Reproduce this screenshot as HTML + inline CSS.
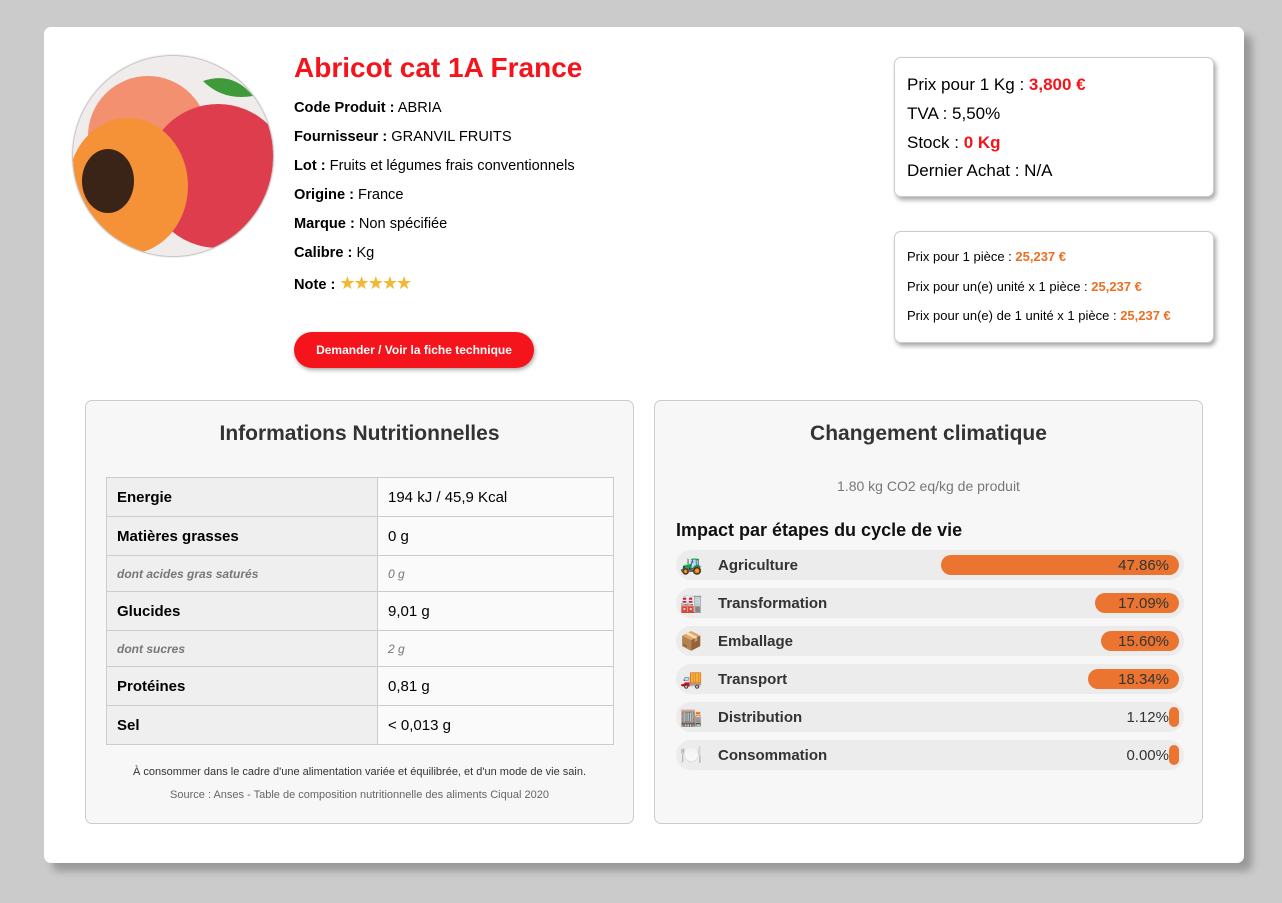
<!DOCTYPE html>
<html><head><meta charset="utf-8"><style>
*{box-sizing:border-box;margin:0;padding:0}
body{width:1282px;height:903px;background:#cbcbcb;font-family:"Liberation Sans",Arial,sans-serif;color:#000;position:relative;overflow:hidden}
.card{position:absolute;left:44px;top:27px;width:1200px;height:836px;background:#fff;border-radius:7px;box-shadow:8px 8px 8px rgba(0,0,0,.25)}
.abs{position:absolute}
.img{left:73px;top:56px;width:200px;height:200px;border-radius:50%;overflow:hidden;box-shadow:0 0 2px #555;background:#f3eeee}
h1{position:absolute;left:294px;top:52px;font-size:28px;color:#f5141c;font-weight:bold;white-space:nowrap}
.info{position:absolute;left:294px;font-size:14.6px;white-space:nowrap}
.btn{left:294px;top:332px;width:240px;height:36px;border-radius:18px;background:#f5141c;color:#fff;font-size:12px;font-weight:bold;text-align:center;line-height:36px;box-shadow:1px 2px 4px rgba(0,0,0,.35)}
.pbox{background:#fff;border:1px solid #ccc;border-radius:7px;box-shadow:2px 3px 5px rgba(0,0,0,.35)}
.pbox div{position:absolute;left:12px;white-space:nowrap}
.r{color:#f5141c;font-weight:bold}.o{color:#ea7024;font-weight:bold}
.panel{background:#f7f7f7;border:1px solid #ccc;border-radius:7px;top:400px;height:424px;width:549px}
.panel h2{position:absolute;left:0;right:0;top:21px;text-align:center;font-size:21px;color:#333}
table{position:absolute;left:20px;top:76px;width:508px;border-collapse:collapse;font-size:15px}
td{border:1px solid #ccc;padding:0 10px;height:39px}
td:first-child{width:271px;background:#efefef;font-weight:bold}
td:last-child{background:#fafafa}
tr.s td{height:36px;font-size:12px;font-style:italic;color:#777}
.row{position:absolute;left:21px;width:508px;height:30px;border-radius:15px;background:#ececec}
.row .ic{position:absolute;left:4px;top:4px;font-size:18px;line-height:22px}
.row .lb{position:absolute;left:42px;top:7px;font-size:15px;font-weight:bold;color:#333}
.row .bar{position:absolute;right:5px;top:5px;height:20px;border-radius:10px;background:#ea7430;text-align:right;padding-right:10px;font-size:15px;color:#333;line-height:21px}
.row .pct{position:absolute;right:15px;top:7px;font-size:15px;color:#333}
</style></head><body>
<div class="card"></div>
<div class="abs img">
<svg width="200" height="200" viewBox="0 0 200 200">
<rect width="200" height="200" fill="#f1ecec"/>
<path d="M130 25 Q160 15 180 40 Q150 45 130 25Z" fill="#3f9a3a"/>
<circle cx="75" cy="80" r="60" fill="#f29070"/>
<circle cx="145" cy="120" r="72" fill="#dd3d4c"/>
<ellipse cx="55" cy="130" rx="60" ry="68" fill="#f59136"/>
<ellipse cx="35" cy="125" rx="26" ry="32" fill="#3a2418"/>
</svg></div>
<h1>Abricot cat 1A France</h1>
<div class="info" style="top:100px"><b>Code Produit :</b> ABRIA</div>
<div class="info" style="top:129px"><b>Fournisseur :</b> GRANVIL FRUITS</div>
<div class="info" style="top:158px"><b>Lot :</b> Fruits et légumes frais conventionnels</div>
<div class="info" style="top:187px"><b>Origine :</b> France</div>
<div class="info" style="top:216px"><b>Marque :</b> Non spécifiée</div>
<div class="info" style="top:245px"><b>Calibre :</b> Kg</div>
<div class="info" style="top:273px"><b>Note :</b> <span style="color:#f5b731;font-size:18px;letter-spacing:-2px">★★★★★</span></div>
<div class="abs btn">Demander / Voir la fiche technique</div>
<div class="abs pbox" style="left:894px;top:57px;width:320px;height:140px;font-size:17px">
<div style="top:17px">Prix pour 1 Kg : <span class="r">3,800 €</span></div>
<div style="top:46px">TVA : 5,50%</div>
<div style="top:75px">Stock : <span class="r">0 Kg</span></div>
<div style="top:103px">Dernier Achat : N/A</div>
</div>
<div class="abs pbox" style="left:894px;top:231px;width:320px;height:112px;font-size:13px">
<div style="top:17px">Prix pour 1 pièce : <span class="o">25,237 €</span></div>
<div style="top:47px">Prix pour un(e) unité x 1 pièce : <span class="o">25,237 €</span></div>
<div style="top:76px">Prix pour un(e) de 1 unité x 1 pièce : <span class="o">25,237 €</span></div>
</div>
<div class="abs panel" style="left:85px">
<h2>Informations Nutritionnelles</h2>
<table>
<tr><td>Energie</td><td>194 kJ / 45,9 Kcal</td></tr>
<tr><td>Matières grasses</td><td>0 g</td></tr>
<tr class="s"><td>dont acides gras saturés</td><td>0 g</td></tr>
<tr><td>Glucides</td><td>9,01 g</td></tr>
<tr class="s"><td>dont sucres</td><td>2 g</td></tr>
<tr><td>Protéines</td><td>0,81 g</td></tr>
<tr><td>Sel</td><td>&lt; 0,013 g</td></tr>
</table>
<div class="abs" style="left:0;right:0;top:365px;text-align:center;font-size:11px;color:#333">À consommer dans le cadre d'une alimentation variée et équilibrée, et d'un mode de vie sain.</div>
<div class="abs" style="left:0;right:0;top:388px;text-align:center;font-size:11px;color:#666">Source : Anses - Table de composition nutritionnelle des aliments Ciqual 2020</div>
</div>
<div class="abs panel" style="left:654px">
<h2>Changement climatique</h2>
<div class="abs" style="left:0;right:0;top:77px;text-align:center;font-size:14px;color:#777">1.80 kg CO2 eq/kg de produit</div>
<div class="abs" style="left:21px;top:119px;font-size:18px;font-weight:bold;color:#111">Impact par étapes du cycle de vie</div>
<div class="row" style="top:149px"><span class="ic">🚜</span><span class="lb">Agriculture</span><span class="bar" style="width:238px">47.86%</span></div>
<div class="row" style="top:187px"><span class="ic">🏭</span><span class="lb">Transformation</span><span class="bar" style="width:84px">17.09%</span></div>
<div class="row" style="top:225px"><span class="ic">📦</span><span class="lb">Emballage</span><span class="bar" style="width:78px">15.60%</span></div>
<div class="row" style="top:263px"><span class="ic">🚚</span><span class="lb">Transport</span><span class="bar" style="width:91px">18.34%</span></div>
<div class="row" style="top:301px"><span class="ic">🏬</span><span class="lb">Distribution</span><span class="pct">1.12%</span><span class="bar" style="width:10px;padding:0"></span></div>
<div class="row" style="top:339px"><span class="ic">🍽️</span><span class="lb">Consommation</span><span class="pct">0.00%</span><span class="bar" style="width:10px;padding:0"></span></div>
</div>
</body></html>
